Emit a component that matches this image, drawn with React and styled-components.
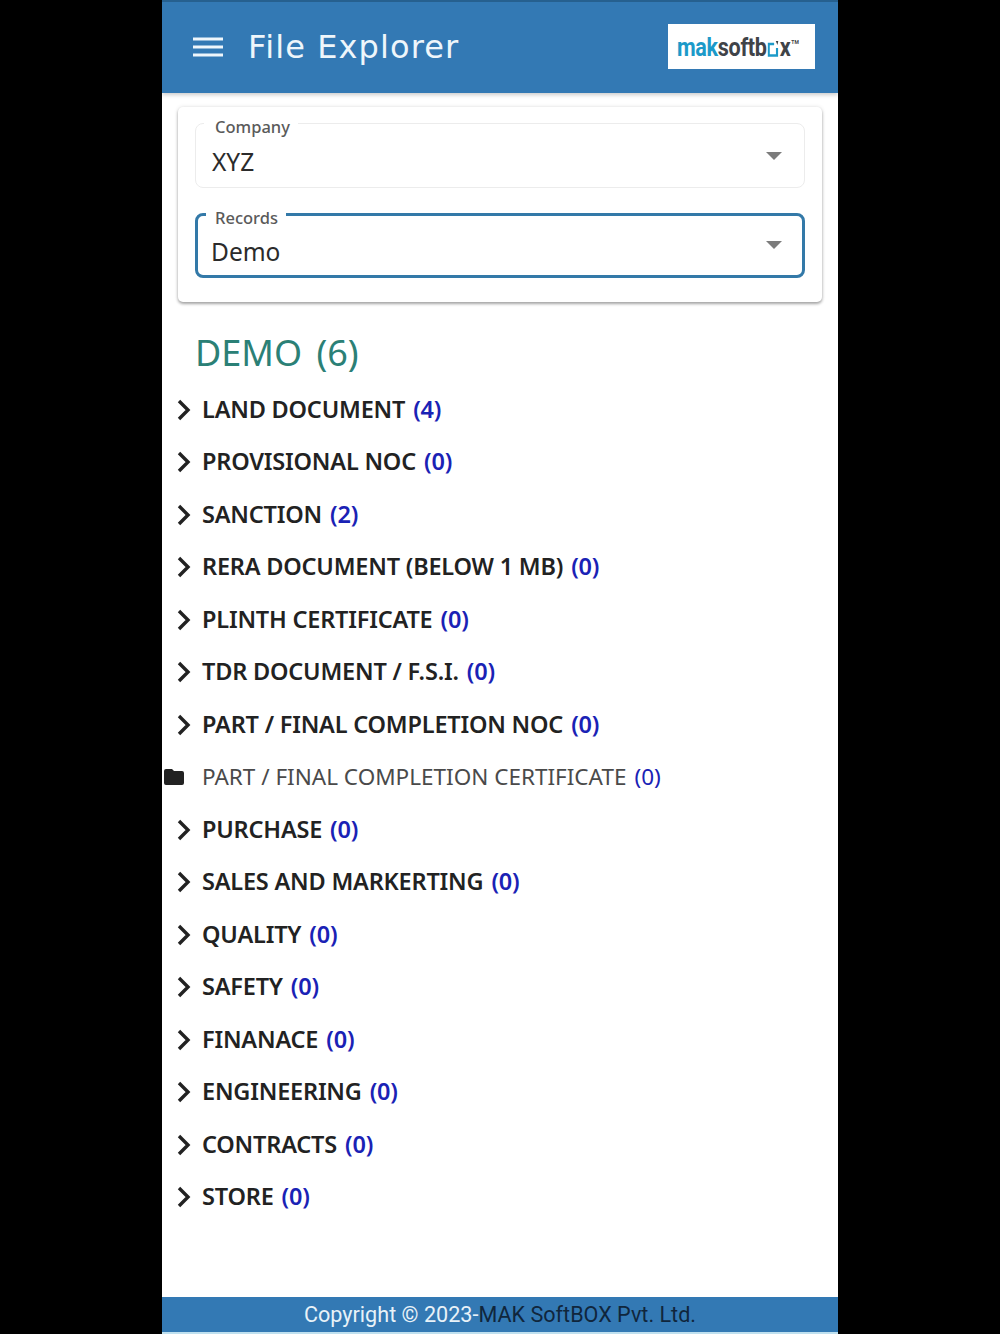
import React from 'react'
import styled, { createGlobalStyle } from 'styled-components'

const Global = createGlobalStyle`
  html, body {
    margin: 0;
    padding: 0;
    background: #000;
  }
  * {
    box-sizing: border-box;
  }
`

const Phone = styled.div`
  width: 676px;
  height: 1334px;
  margin: 0 auto;
  background: #fff;
  display: flex;
  flex-direction: column;
  font-family: "Noto Sans", sans-serif;
`

const Header = styled.header`
  height: 93px;
  flex: none;
  background: #3379b4;
  border-top: 2px solid #26608f;
  display: flex;
  align-items: center;
  padding: 0 23px 2px 31px;
  box-shadow: 0 2px 4px rgba(0, 0, 0, 0.2);
`

const Burger = styled.svg`
  width: 30px;
  height: 20px;
  flex: none;
  margin-right: 25px;
`

const Title = styled.h1`
  flex: 1;
  margin: 0;
  color: #eef6fb;
  font-family: "DejaVu Sans", sans-serif;
  font-size: 32px;
  font-weight: 400;
  letter-spacing: 1.1px;
`

const Logo = styled.div`
  width: 147px;
  height: 45px;
  background: #fff;
  display: flex;
  align-items: center;
  padding-left: 9px;
  overflow: hidden;
`

const LogoMark = styled.div`
  display: flex;
  align-items: center;
  flex: none;
  font-family: Roboto, sans-serif;
  font-size: 26px;
  font-weight: 700;
  letter-spacing: -0.4px;
  color: #3f4348;
  transform: scaleX(0.83);
  transform-origin: left center;
`

const LogoBlue = styled.span`
  color: #1c9ac9;
`

const LogoBox = styled.svg`
  width: 15px;
  height: 17px;
  margin: 3px 0 0 1px;
  flex: none;
`

const LogoTm = styled.span`
  font-size: 6px;
  margin: -10px 0 0 1px;
  letter-spacing: 0;
`

const Card = styled.section`
  flex: none;
  margin: 14px 16px 0;
  height: 195px;
  padding: 4.5px 17px 0;
  background: #fff;
  border-radius: 5px;
  box-shadow: 0 2px 3px rgba(0, 0, 0, 0.32), 0 0 4px rgba(0, 0, 0, 0.12);
  display: flex;
  flex-direction: column;
  gap: 15px;
`

const Field = styled.fieldset`
  position: relative;
  height: ${({ focused }) => (focused ? '75px' : '76px')};
  margin: 0;
  padding: 0 8px;
  border: ${({ focused }) => (focused ? '3px solid #3379a8' : '1.5px solid #ececec')};
  border-radius: 8px;
`

const Legend = styled.legend`
  padding: 6px 8px 0 ${({ focused }) => (focused ? '9px' : '11px')};
  font-size: 16.5px;
  font-weight: 500;
  line-height: 17px;
  color: #5a5a5a;
`

const Value = styled.div`
  font-size: 24.5px;
  line-height: 34px;
  margin: ${({ focused }) => (focused ? '9px 0 0 5px' : '10px 0 0 8px')};
  color: #2b2b2b;
`

const Caret = styled.span`
  position: absolute;
  right: ${({ focused }) => (focused ? '20px' : '22px')};
  top: ${({ focused }) => (focused ? '15px' : '17px')};
  width: 0;
  height: 0;
  border-left: 8px solid transparent;
  border-right: 8px solid transparent;
  border-top: 8px solid #7c7c7c;
`

const Heading = styled.h2`
  flex: none;
  margin: 28px 0 0 33px;
  color: #2b8076;
  font-size: 36px;
  line-height: 46px;
  font-weight: 400;
  word-spacing: 5px;
`

const Tree = styled.ul`
  flex: 1;
  list-style: none;
  margin: 6.5px 0 0;
  padding: 0;
`

const Row = styled.li`
  height: 52.53px;
  display: flex;
  align-items: center;
  font-size: ${({ leaf }) => (leaf ? '22.5px' : '23.5px')};
  font-weight: ${({ leaf }) => (leaf ? 400 : 600)};
  letter-spacing: ${({ leaf }) => (leaf ? '0' : '-0.2px')};
  color: ${({ leaf }) => (leaf ? '#4a4a4a' : '#222')};
  white-space: nowrap;
`

const IconSlot = styled.span`
  width: 40px;
  flex: none;
  display: flex;
  padding: ${({ leaf }) => (leaf ? '2px 0 0 2px' : '2px 0 0 15px')};
`

const Count = styled.span`
  color: #1a22b5;
  margin-left: 8px;
`

const Footer = styled.footer`
  height: 37px;
  flex: none;
  background: #3379b4;
  color: #e8f2f8;
  font-family: Roboto, sans-serif;
  font-size: 21.6px;
  display: flex;
  justify-content: center;
  align-items: center;
  padding-bottom: 1px;
  border-bottom: 2px solid #bfe0ef;
`

const FooterDark = styled.span`
  color: #10263c;
`

const rows = [
  ['LAND DOCUMENT', 4],
  ['PROVISIONAL NOC', 0],
  ['SANCTION', 2],
  ['RERA DOCUMENT (BELOW 1 MB)', 0],
  ['PLINTH CERTIFICATE', 0],
  ['TDR DOCUMENT / F.S.I.', 0],
  ['PART / FINAL COMPLETION NOC', 0],
  ['PART / FINAL COMPLETION CERTIFICATE', 0, true],
  ['PURCHASE', 0],
  ['SALES AND MARKERTING', 0],
  ['QUALITY', 0],
  ['SAFETY', 0],
  ['FINANACE', 0],
  ['ENGINEERING', 0],
  ['CONTRACTS', 0],
  ['STORE', 0],
]

const Chevron = () => (
  <svg width="14" height="22" viewBox="0 0 14 22">
    <path d="M2 2l9 9-9 9" fill="none" stroke="#222" strokeWidth="3.4" />
  </svg>
)

const Folder = () => (
  <svg width="20" height="16" viewBox="0 0 20 16">
    <path d="M2 0h6l2 2h8a2 2 0 0 1 2 2v10a2 2 0 0 1-2 2H2a2 2 0 0 1-2-2V2a2 2 0 0 1 2-2z" fill="#222" />
  </svg>
)

const Select = ({ label, value, focused }) => (
  <Field focused={focused}>
    <Legend focused={focused}>{label}</Legend>
    <Value focused={focused}>{value}</Value>
    <Caret focused={focused} />
  </Field>
)

const App = () => (
  <Phone>
    <Global />
    <Header>
      <Burger viewBox="0 0 30 20">
        <path d="M0 2h30M0 10h30M0 18h30" stroke="#eef6fb" strokeWidth="3" />
      </Burger>
      <Title>File Explorer</Title>
      <Logo>
        <LogoMark>
          <LogoBlue>mak</LogoBlue>softb
          <LogoBox viewBox="0 0 15 17">
            <path d="M8 4H1.5v11.5h10V8" fill="none" stroke="#1c9ac9" strokeWidth="2.6" />
            <path d="M10 1l3 0-1 4z" fill="#3f4348" />
          </LogoBox>
          x<LogoTm>TM</LogoTm>
        </LogoMark>
      </Logo>
    </Header>
    <Card>
      <Select label="Company" value="XYZ" />
      <Select label="Records" value="Demo" focused />
    </Card>
    <Heading>DEMO (6)</Heading>
    <Tree>
      {rows.map(([name, count, leaf]) => (
        <Row key={name} leaf={leaf}>
          <IconSlot leaf={leaf}>{leaf ? <Folder /> : <Chevron />}</IconSlot>
          {name}
          <Count>({count})</Count>
        </Row>
      ))}
    </Tree>
    <Footer>
      Copyright © 2023-<FooterDark>MAK SoftBOX Pvt. Ltd.</FooterDark>
    </Footer>
  </Phone>
)

export default App
